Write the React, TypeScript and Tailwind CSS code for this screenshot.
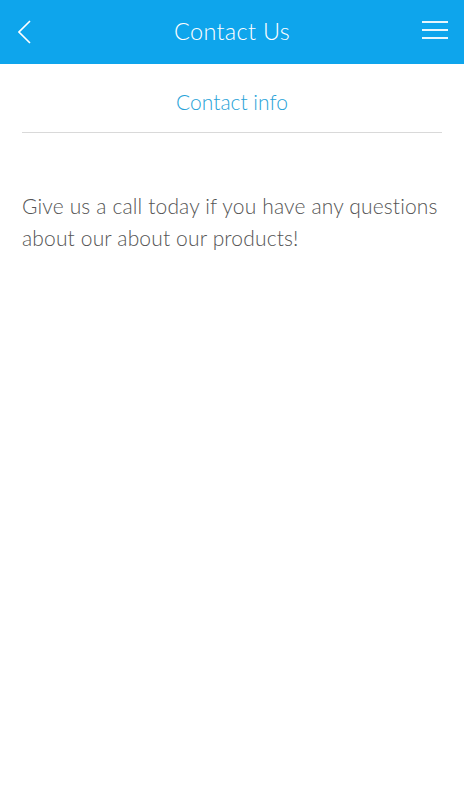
export default function App() {
  return (
    <div className="w-[464px] min-h-[800px] bg-white font-['Lato','Liberation_Sans',sans-serif]">
      <header className="h-[64px] bg-[#0ea5ec] grid grid-cols-[1fr_auto_1fr] items-center px-[18px] text-white">
        <button className="w-[14px] h-[24px] flex items-center">
          <svg width="14" height="24" viewBox="0 0 14 24" fill="none" stroke="white" strokeWidth="1.6">
            <path d="M12 1 L1 12 L12 23" />
          </svg>
        </button>
        <h1 className="text-[23.5px] font-light tracking-[0.3px]">Contact Us</h1>
        <div className="flex justify-end">
          <button className="w-[26px] h-[20px] mr-[-2px] -mt-[4px] flex flex-col justify-between py-[1px]">
            <span className="block h-[2px] w-full bg-white/90" />
            <span className="block h-[2px] w-full bg-white/90" />
            <span className="block h-[2px] w-full bg-white/90" />
          </button>
        </div>
      </header>
      <main className="px-[22px]">
        <div className="pt-[26px] pb-[18px] text-center text-[21px] leading-[24px] font-light text-[#27a2d8] border-b border-[#d9d9d9]">
          Contact info
        </div>
        <p className="mt-[57px] text-[21px] leading-[32px] font-light tracking-[0.15px] text-[#555]">
          Give us a call today if you have any questions about our about our products!
        </p>
      </main>
    </div>
  );
}
